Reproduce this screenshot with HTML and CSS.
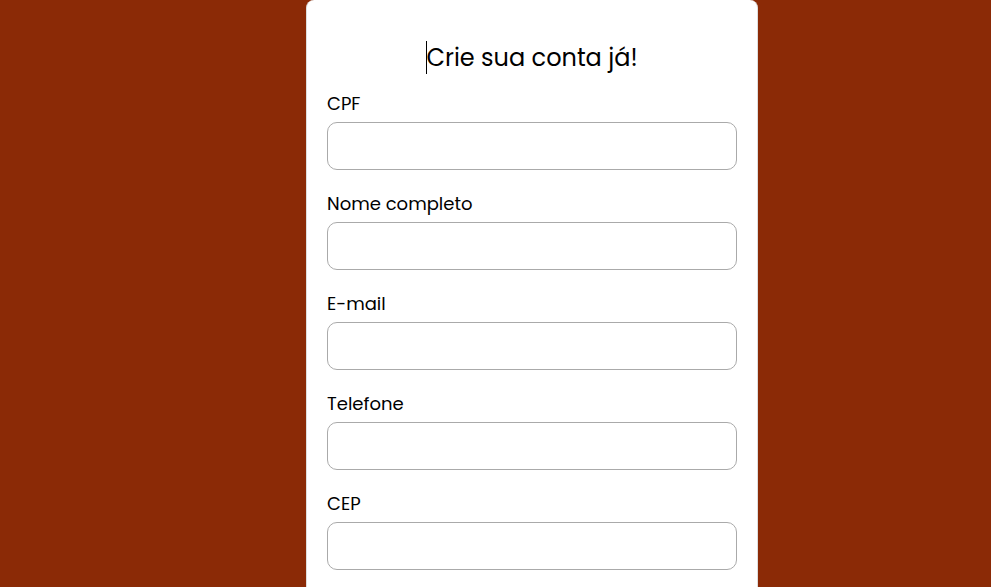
FILE: index.html
```html
<!DOCTYPE html>
<html lang="pt-BR">
<head>
  <meta charset="utf-8">
  <meta name="viewport" content="width=device-width, initial-scale=1">
  <title>Cadastro</title>
  <link rel="stylesheet" href="styles.css">
</head>
<body>
  <main class="page">
    <form class="card">
      <h1 class="title"><span class="title-text">Crie sua conta já!</span></h1>
      <div class="field">
        <label for="cpf">CPF</label>
        <input id="cpf" name="cpf" type="text">
      </div>
      <div class="field">
        <label for="nome">Nome completo</label>
        <input id="nome" name="nome" type="text">
      </div>
      <div class="field">
        <label for="email">E-mail</label>
        <input id="email" name="email" type="email">
      </div>
      <div class="field">
        <label for="telefone">Telefone</label>
        <input id="telefone" name="telefone" type="tel">
      </div>
      <div class="field">
        <label for="cep">CEP</label>
        <input id="cep" name="cep" type="text">
      </div>
    </form>
  </main>
</body>
</html>
```
FILE: styles.css
```css
* {
  box-sizing: border-box;
}

body {
  margin: 0;
  background: #8b2a06;
  color: #000;
  font-family: Poppins, Inter, "Open Sans", sans-serif;
}

.page {
  display: flex;
  justify-content: center;
  min-height: 100vh;
  padding-left: 73px;
}

.card {
  display: flex;
  flex-direction: column;
  gap: 20px;
  width: 100%;
  max-width: 452px;
  padding: 40px 20px 0;
  border: 1px solid #ddd;
  border-width: 0 1px;
  border-radius: 8px 8px 0 0;
  background: #fff;
}

.title {
  margin: 0 0 -6px;
  font-size: 24px;
  font-weight: 400;
  line-height: 36px;
  text-align: center;
}

.title-text {
  position: relative;
}

/* Text cursor before the heading */
.title-text::before {
  content: "";
  position: absolute;
  top: 0;
  bottom: 0;
  left: 0;
  width: 1px;
  background: #000;
}

.field {
  display: flex;
  flex-direction: column;
  gap: 5px;
}

.field label {
  font-size: 18px;
  line-height: 27px;
}

.field input {
  width: 100%;
  height: 48px;
  padding: 0 12px;
  border: 1px solid #aaa;
  border-radius: 10px;
  background: #fff;
  font: inherit;
  font-size: 18px;
}
```
